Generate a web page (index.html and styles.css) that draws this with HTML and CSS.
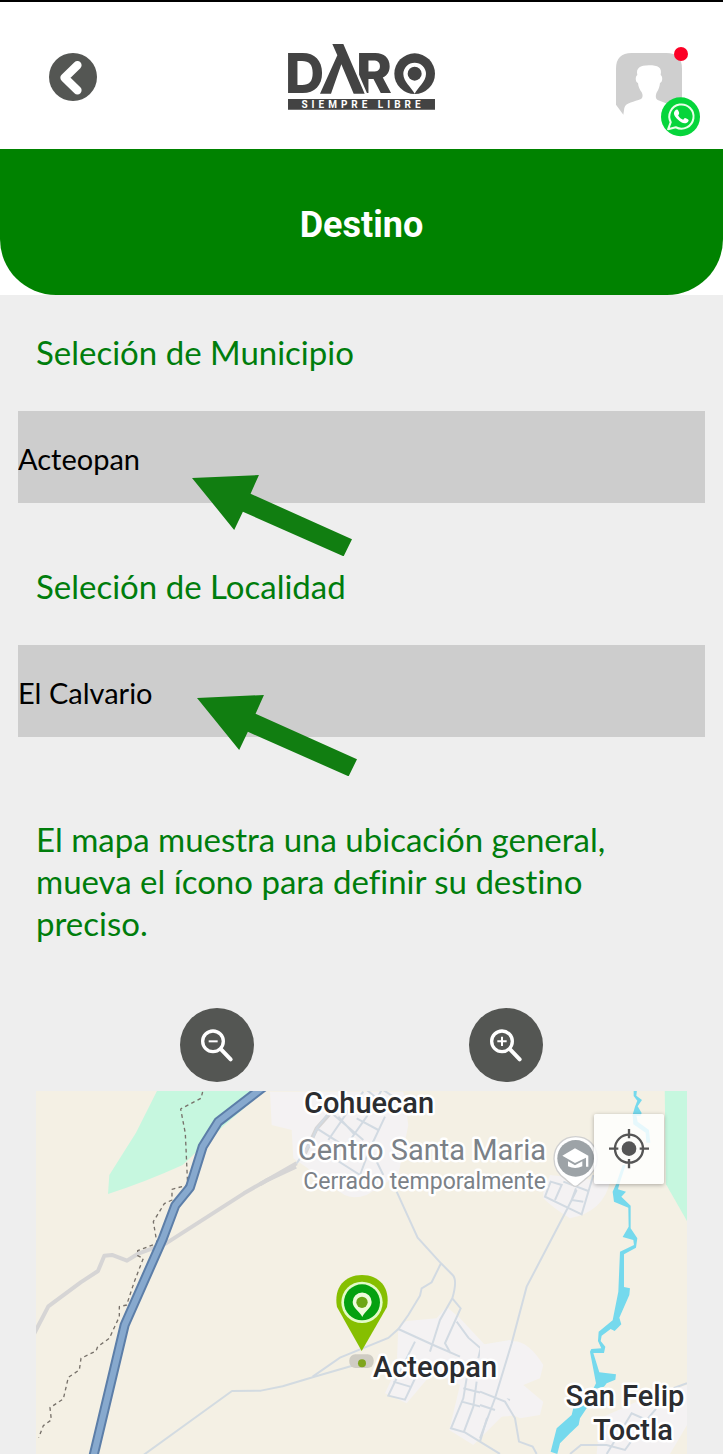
FILE: index.html
```html
<!DOCTYPE html>
<html lang="es">
<head>
<meta charset="utf-8">
<meta name="viewport" content="width=device-width, initial-scale=1">
<title>Destino</title>
<link rel="stylesheet" href="styles.css">
</head>
<body>
<header class="topbar">
  <button class="back" type="button" aria-label="Regresar">
    <svg viewBox="147 68 142 144"><path d="M231 104 193 141 231 178" fill="none" stroke="#fff" stroke-width="25" stroke-linecap="round" stroke-linejoin="round"/></svg>
  </button>
  <svg class="logo" viewBox="54 39 441 197" role="img" aria-label="Daro, siempre libre">
    <g fill="#434343">
      <text class="logo-letter" x="45" y="187">D</text>
      <text class="logo-letter" x="258" y="187">R</text>
      <path class="logo-cut" d="M187 39h33l64 149h-33l-37-88-31 88h-33l52-115z"/>
      <circle cx="434" cy="128" r="61"/>
      <path d="M434 188c-9-18-34-36-34-59a34 34 0 0 1 68 0c0 23-25 41-34 59z" fill="#fff"/>
      <circle cx="434" cy="128" r="21"/>
      <path d="M54 204h441v32H54z"/>
    </g>
    <text class="logo-tagline" x="279" y="231" text-anchor="middle">SIEMPRE LIBRE</text>
  </svg>
  <div class="account">
    <button class="avatar" type="button" aria-label="Mi cuenta">
      <svg viewBox="48 53 198 187"><path d="M70 238 48 208V100q0-47 47-47h104q47 0 47 47v104h-48l-25-10c-8-4-6-18-2-24 5-8 8-17 9-27 8-2 9-20 2-24 5-23-8-29-35-29s-40 9-35 29c-7 4-6 22 2 24 1 11 5 20 11 28 4 7 4 17-2 20-20 9-46 10-50 27z" fill="#cfcfcf"/></svg>
    </button>
    <span class="alert-dot"></span>
    <a class="whatsapp" href="#whatsapp" aria-label="WhatsApp">
      <svg viewBox="184 188 116 118"><circle cx="242" cy="247" r="58" fill="#06d53b"/><path d="M205 284l8-21a36 36 0 1 1 15 15z" fill="none" stroke="#e9ffe9" stroke-width="6" stroke-linejoin="round"/><path d="M226 228c5-5 8-3 10 2 3 7 3 7-1 13 4 7 9 10 15 13 5-7 5-6 11-3 7 3 6 5 3 9-8 8-20 3-30-7-9-9-16-18-8-27z" fill="#fff"/></svg>
    </a>
  </div>
</header>
<main>
  <div class="banner-wrap"><h1 class="banner">Destino</h1></div>
  <form class="form">
    <label class="caption" for="municipio">Seleción de Municipio</label>
    <div class="field">
      <select class="picker" id="municipio"><option>Acteopan</option></select>
      <svg class="arrow arrow-municipio" viewBox="577 465 478 243"><path d="M577 474 777 465 752 521 1055 657 1030 708 729 575 703 629z"/></svg>
    </div>
    <label class="caption" for="localidad">Seleción de Localidad</label>
    <div class="field">
      <select class="picker" id="localidad"><option>El Calvario</option></select>
      <svg class="arrow arrow-localidad" viewBox="577 465 478 243"><path d="M577 474 777 465 752 521 1055 657 1030 708 729 575 703 629z"/></svg>
    </div>
  </form>
  <p class="hint">El mapa muestra una ubicación general, mueva el ícono para definir su destino preciso.</p>
  <div class="zoom-controls">
    <button class="zoom" type="button" aria-label="Alejar">
      <svg viewBox="60 54 222 222"><g fill="none" stroke="#fff"><circle cx="159" cy="154" r="31" stroke-width="10"/><path d="M184 179 212 208" stroke-width="12" stroke-linecap="round"/><path d="M146 154h27" stroke-width="6"/></g></svg>
    </button>
    <button class="zoom" type="button" aria-label="Acercar">
      <svg viewBox="60 54 222 222"><g fill="none" stroke="#fff"><circle cx="159" cy="154" r="31" stroke-width="10"/><path d="M184 179 212 208" stroke-width="12" stroke-linecap="round"/><path d="M145 154h28M159 140v28" stroke-width="6"/></g></svg>
    </button>
  </div>
  <section class="map" aria-label="Mapa">
    <svg class="map-canvas" viewBox="0 0 651 363">
      <path fill="#f4f0e4" d="M0 0h651v363H0z"/>
      <g transform="translate(0 -6) scale(.3333)">
        <path fill="#c6f7df" d="M372 0H705L560 125 440 240Q330 290 216 327L220 270 300 143z"/>
        <g fill="none" stroke-linejoin="round">
          <path stroke="#d6d5d5" stroke-width="12" d="M-10 755 37 664 134 592 186 558 205 512 228 510 273 527 305 507 390 475 624 325 690 287 780 245"/>
          <path stroke="#d3dbe1" stroke-width="6" d="M320 1112 588 918 675 917 740 904 830 877 975 835"/>
          <path stroke="#77716a" stroke-width="4" stroke-dasharray="11 10" d="M505 0 495 40 434 72 448 145 455 300 408 313 408 345 385 356 352 410 363 475 305 497 305 512 322 520 295 590 272 660 250 665 250 695 220 760 185 785 180 798 135 820 130 855 97 877 82 942 42 968 46 1005 22 1022 8 1058"/>
          <path stroke="#5c7ea8" stroke-width="30" d="M690 0 547 110 500 185 462 307 418 361 380 462 266 720 172 1115"/>
          <path stroke="#87a9ce" stroke-width="18" d="M690 0 547 110 500 185 462 307 418 361 380 462 266 720 172 1115"/>
        </g>
      </g>
      <g transform="translate(224 -6) scale(.3333)">
        <path fill="#f4f2f3" d="M30 20H430L445 120 415 270 320 330Q260 350 230 310L100 220 95 135 35 120zM415 725 440 708 530 700 560 665 600 700 680 785 750 770Q800 760 850 840L840 880 790 900 850 950 840 990 780 1000 740 980 640 1080 568 1035 600 900 520 860 440 955 375 925 410 850z"/>
        <g fill="none" stroke="#d2dae2" stroke-width="6">
          <path stroke="#d6d5d5" stroke-width="12" d="M0 298 110 235M135 205 170 130 210 85"/>
          <path d="M110 235 155 170 170 130 265 190M170 130 210 80 310 165M205 165 270 70M245 105 310 20M260 180 320 95 365 15M290 100 355 135M235 95 285 150M335 180 375 95M190 200 300 270M300 270 330 190 370 270M315 10 350 40M370 15 400 35"/>
          <path d="M410 320 473 458 543 535 578 570Q593 585 577 640L540 705 510 800M543 535 515 592 485 610 480 632 445 690 415 732 385 759 240 818 158 875M577 640 602 670 585 708 555 775 572 805M590 710 625 758 662 790 655 820M415 732 520 780 600 815M465 770 410 880 385 932 435 944 470 870M400 890 450 905M620 880 610 940 573 1030 615 1042 720 1107M610 910 750 945M605 950 700 975M650 890 640 965 612 1040M720 885 690 970 660 1070"/>
        </g>
      </g>
      <g transform="translate(444 -6) scale(.3333)">
        <path fill="#f4f2f3" d="M190 320 210 270 390 290Q370 380 270 400 220 370 190 340zM0 780 90 765Q125 790 130 845L115 880 80 940 125 990 0 1000zM360 1000 470 950 621 900V1020L570 1107H350z"/>
        <path fill="#c6f7df" d="M554 0h67v408L558 298z"/>
        <g fill="none" stroke="#d2dae2" stroke-width="6">
          <path d="M340 270 305 388 195 335 212 290 245 300 225 345M250 290 325 318M288 310 275 345 310 350M290 315 260 375 140 605 95 775 45 940 0 1060M0 920 75 950 105 1000 117 1070 158 1085 170 1107M0 960 45 975M270 1107 303 1080 380 1080 435 1095 460 1060M380 1107 455 985 500 1005 528 972M580 910 621 895"/>
        </g>
        <g fill="#75d9ed">
          <path d="M461 15h10l-2 17 17 13-13 19 12 20-3 8h-25l8-27 7-18-11-14z"/>
          <path d="M458 90h11l4 20 34 25 4 38h-12l-2-30-37-25zM428 240h9l-19 58h-10z"/>
          <path d="M408 298 418 298 414 313 438 320 424 335 452 362V430L472 460 468 488 432 508V606L450 610 448 630 418 698 424 718 404 738 392 732 365 752 362 768 376 785 372 804H340L358 862 408 868 406 884 380 895 372 905 345 912 320 970 300 1000 296 1020 270 1045 240 1075 232 1107 212 1100 230 1030 275 990 280 970 320 950 348 895 330 800 334 792 364 790 354 768 356 740 398 706 415 620 420 500 462 480 460 465 428 456 446 425 445 368 402 350 398 320z"/>
        </g>
        <path fill="#fff" stroke="#d0d0d0" stroke-width="4" d="M287 155c38 0 65 28 65 66 0 30-17 48-38 63l-20 17q-8 6-16 0l-20-17c-21-15-36-33-36-63 0-38 27-66 65-66z"/>
        <circle cx="287" cy="220" r="55" fill="#9da3a7"/>
        <path fill="#fff" d="M247 212 285 190 325 212V245H318V218L285 234zM264 229 285 241 307 229V244Q286 254 264 244z"/>
      </g>
      <g class="map-place">
        <text x="333" y="22">Cohuecan</text>
        <text x="399" y="286">Acteopan</text>
        <text x="589" y="315">San Felip</text>
        <text x="597" y="349">Toctla</text>
      </g>
      <text class="map-poi" x="510" y="69">Centro Santa Maria</text>
      <text class="map-note" x="510" y="98">Cerrado temporalmente</text>
      <g transform="translate(224 -6) scale(.3333)">
        <rect x="268" y="808" width="73" height="41" rx="18" fill="#cfccc3"/>
        <circle cx="306" cy="835" r="12" fill="#7fa51d"/>
        <path fill="#86bf00" d="M305 798 231 666C220 607 255 570 306 570S392 607 381 666z"/>
        <circle cx="306" cy="652" r="62" fill="#e3fbc8"/>
        <circle cx="306" cy="652" r="54" fill="#05a110"/>
        <path fill="#effbdc" d="M307 696C300 680 278 670 278 651a28 28 0 0 1 57 0C335 670 313 680 307 696z"/>
        <circle cx="306" cy="652" r="17" fill="#6ba616"/>
      </g>
    </svg>
    <button class="locate" type="button" aria-label="Mi ubicación">
      <svg viewBox="343 87 210 210"><g fill="none" stroke="#555" stroke-width="7"><circle cx="448" cy="191" r="42"/><path d="M448 132v28M448 222v28M388 191h28M480 191h28"/></g><circle cx="448" cy="191" r="22" fill="#555"/></svg>
    </button>
  </section>
</main>
</body>
</html>
```
FILE: styles.css
```css
* { box-sizing: border-box; }
body {
  margin: 0;
  background: #eee;
  border-top: 2px solid #000;
  font-family: Lato, "Open Sans", sans-serif;
  font-size: 33px;
  line-height: 42px;
  font-variant-ligatures: none;
  color: #007d0c;
}
button { padding: 0; border: 0; background: none; cursor: pointer; }
svg { display: block; width: 100%; }

.topbar {
  display: grid;
  grid-template-columns: 1fr auto 1fr;
  align-items: center;
  height: 147px;
  padding: 2px 23px 0;
  background: #fff;
}
.back {
  width: 48px;
  height: 48px;
  margin-left: 26px;
  border-radius: 50%;
  background: #545653;
}
.logo { width: 147px; overflow: visible; }
.logo-letter { font: 800 163px Inter, sans-serif; }
.logo-cut { stroke: #fff; stroke-width: 14px; paint-order: stroke; }
.logo-tagline { font: 700 30px Roboto, sans-serif; letter-spacing: 12px; fill: #fff; }

.account {
  position: relative;
  align-self: end;
  justify-self: end;
  width: 84px;
  height: 90px;
  margin-bottom: 12px;
  padding-top: 6px;
}
.avatar { display: block; width: 66px; }
.alert-dot {
  position: absolute;
  top: 0;
  right: 12px;
  width: 14px;
  height: 14px;
  border-radius: 50%;
  background: #fc0025;
}
.whatsapp { position: absolute; right: 0; bottom: 0; width: 39px; }

.banner-wrap { background: #fff; }
.banner {
  display: flex;
  align-items: center;
  justify-content: center;
  height: 146px;
  margin: 0;
  padding-top: 6px;
  border-radius: 0 0 56px 56px;
  background: #008200;
  color: #fff;
  font: 700 36px/42px Roboto, sans-serif;
}

.form { padding: 36px 18px 0; }
.caption { display: block; padding: 0 18px; }
.field { position: relative; margin: 38px 0 62px; }
.picker {
  display: block;
  width: 100%;
  height: 92px;
  padding: 4px 0 0;
  border: 0;
  border-radius: 0;
  appearance: none;
  background: #cdcdcd;
  color: #000;
  font: 29px/36px Lato, "Open Sans", sans-serif;
}
.arrow { position: absolute; width: 160px; fill: #117e11; pointer-events: none; }
.arrow-municipio { left: 174px; top: 64px; }
.arrow-localidad { left: 179px; top: 50px; }

.hint { margin: 81px 36px 64px; }
.form .field:last-child { margin-bottom: 0; }

.zoom-controls {
  display: flex;
  justify-content: space-around;
  width: 80%;
  margin: 0 auto 9px;
}
.zoom { width: 74px; height: 74px; border-radius: 50%; background: #545653; }

.map { position: relative; margin: 0 36px; }
.map-canvas text {
  font-family: Roboto, sans-serif;
  text-anchor: middle;
  paint-order: stroke;
  stroke: #fff;
  stroke-width: 5px;
  stroke-linejoin: round;
}
.map-place { font-size: 29px; font-weight: 500; fill: #2b2d30; }
.map-canvas .map-poi { font-size: 29px; fill: #7b8187; text-anchor: end; }
.map-canvas .map-note { font-size: 23px; fill: #7b8187; text-anchor: end; }
.locate {
  position: absolute;
  top: 23px;
  right: 23px;
  width: 70px;
  height: 70px;
  border-radius: 2px;
  background: rgba(255, 255, 255, .82);
  box-shadow: 0 1px 4px rgba(0, 0, 0, .3);
}
```
